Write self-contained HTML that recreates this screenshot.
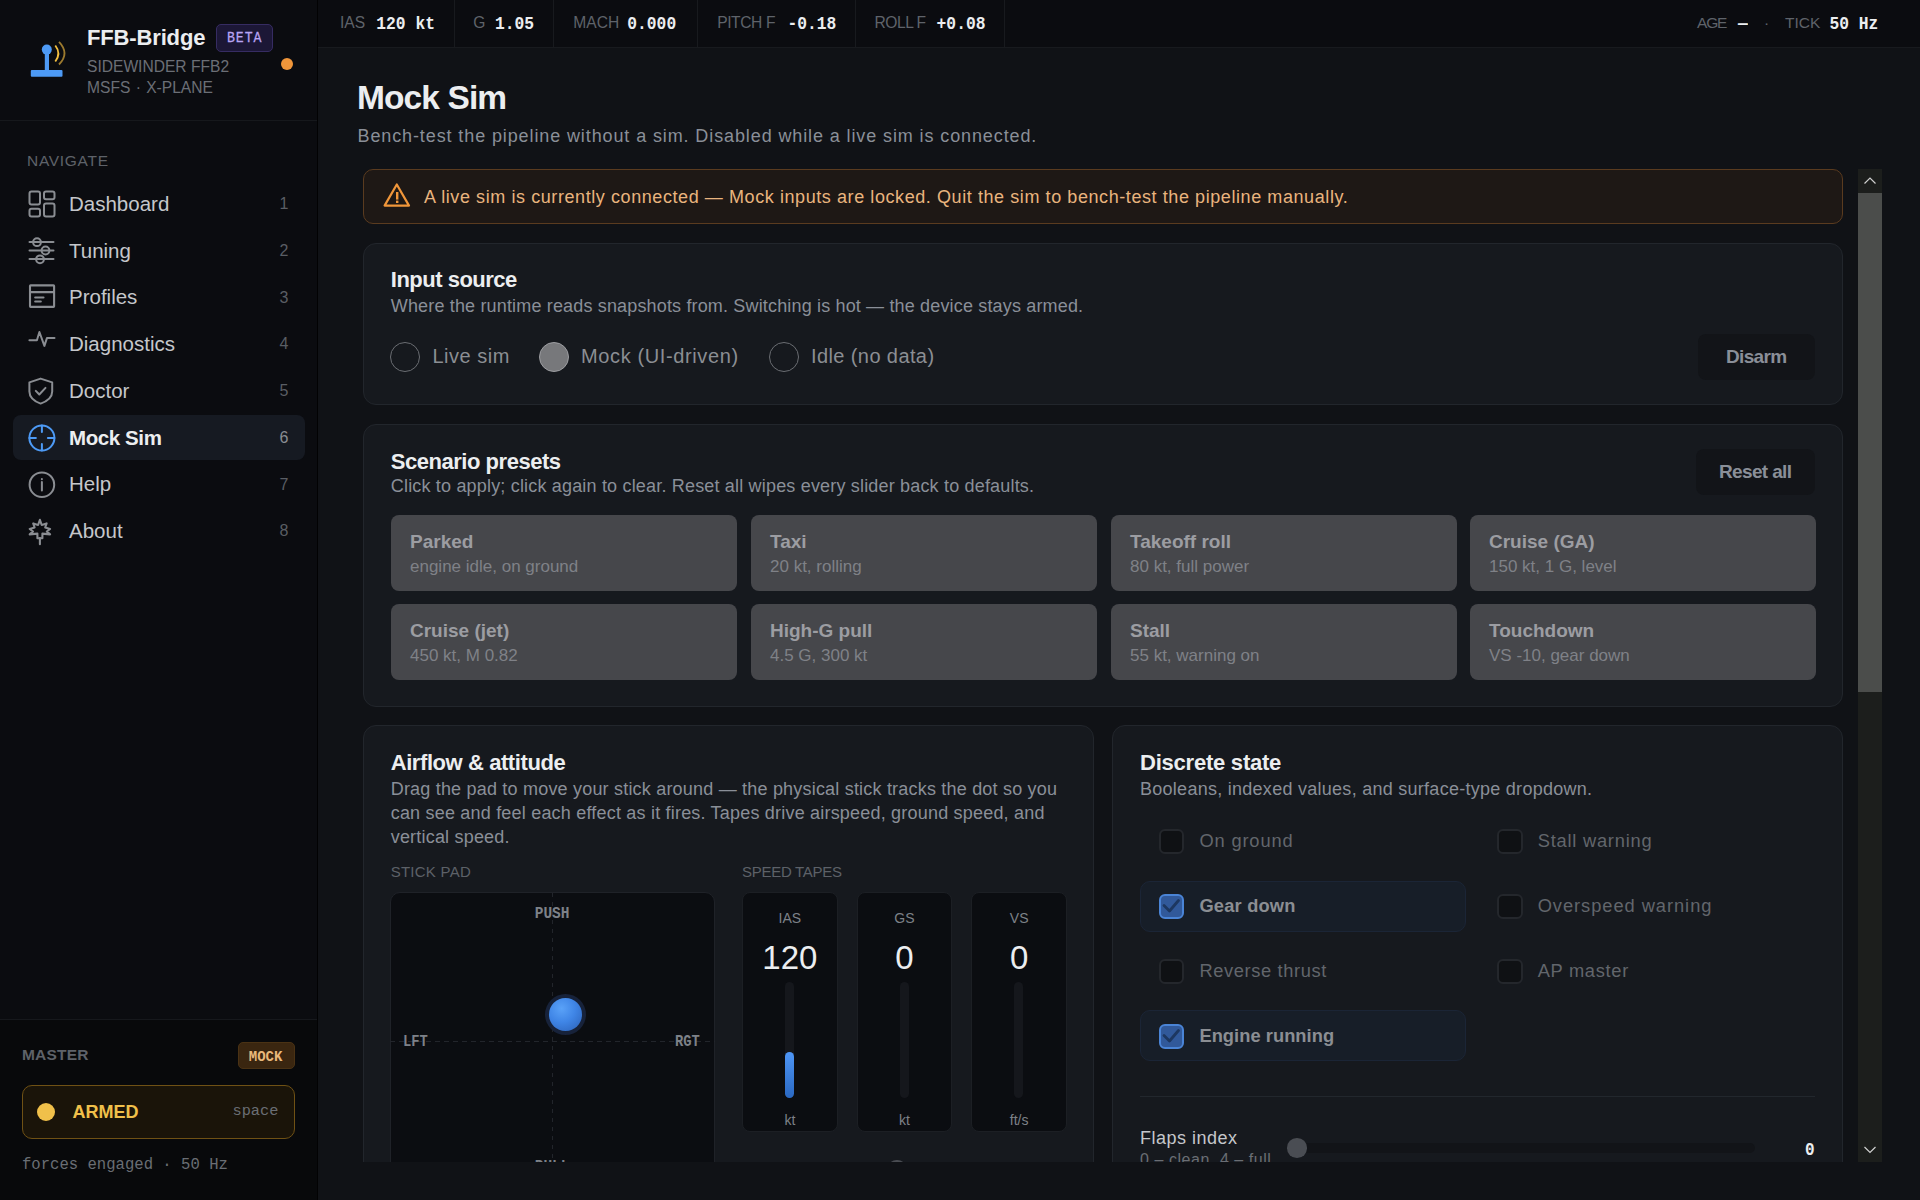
<!DOCTYPE html>
<html><head><meta charset="utf-8">
<style>
*{box-sizing:border-box;margin:0;padding:0}
html,body{width:1920px;height:1200px;overflow:hidden;background:#101216;font-family:"Liberation Sans",sans-serif}
.a{position:absolute}
.t{position:absolute;white-space:nowrap;line-height:1}
.m{font-family:"Liberation Mono",monospace}
.b{font-weight:bold}
#side{position:absolute;left:0;top:0;width:318px;height:1200px;background:#0b0c10;border-right:1px solid #020203}
#top{position:absolute;left:318px;top:0;width:1602px;height:48px;background:#0b0c10;border-bottom:1px solid #181a1e}
.sep{position:absolute;top:0;width:1px;height:47px;background:#181a1e}
.tl{color:#5f636a;font-size:15.6px;letter-spacing:0px;margin-top:0.2px}
.tv{color:#eceef0;font-size:16.3px;font-weight:bold;transform:scaleY(1.18);transform-origin:0 12.5px}
.nav{color:#c5c7cb;font-size:20.5px;margin-top:0.4px}
.num{color:#5a5e64;font-size:16px;margin-right:-1.5px;margin-top:-1.8px}
.ico{position:absolute;left:27px;width:30px;height:30px}
.card{position:absolute;background:#16191e;border:1px solid #22262c;border-radius:13px}
.ct{color:#eceef0;font-size:22px;font-weight:bold}
.cd{color:#8a8f98;font-size:18px}
.tile{position:absolute;background:#46474b;border-radius:8px;width:346px;height:76.7px}
.tile .tt{position:absolute;left:19px;top:17.2px;color:#9c9da2;font-size:19px;font-weight:bold;line-height:1;white-space:nowrap}
.tile .ts{position:absolute;left:19px;top:43px;color:#7f8187;font-size:17px;line-height:1;white-space:nowrap}
</style></head><body>

<!-- SIDEBAR -->
<div id="side">
  <svg class="a" style="left:26px;top:38px" width="44" height="44" viewBox="26 38 44 44">
    <rect x="30.8" y="70" width="31.7" height="6.7" rx="1" fill="#4d9af5"/>
    <rect x="44.8" y="52" width="4.2" height="19" fill="#4d9af5"/>
    <circle cx="46.8" cy="49.6" r="5" fill="#4d9af5"/>
    <path d="M55.3 45.5 Q61.5 53.5 55.3 61.5" stroke="#f5c040" stroke-width="1.8" fill="none"/>
    <path d="M59 41.8 Q70 53.3 59 64.5" stroke="#9c7a2e" stroke-width="1.8" fill="none"/>
  </svg>
  <div class="t b" style="left:87px;top:27px;font-size:22px;letter-spacing:-0.15px;color:#eceef0">FFB-Bridge</div>
  <div class="a" style="left:216px;top:24px;width:57px;height:27.5px;background:#1c1736;border:1px solid #362c62;border-radius:5px"></div>
  <div class="t m" style="left:227px;top:31.8px;font-size:13.2px;letter-spacing:0.9px;color:#b8a4f4;transform:scaleY(1.12);transform-origin:0 10px;-webkit-text-stroke:0.25px #b8a4f4">BETA</div>
  <div class="t" style="left:87px;top:58.5px;font-size:15.6px;color:#6b6f76">SIDEWINDER FFB2</div>
  <div class="t" style="left:87px;top:79.7px;font-size:15.6px;color:#6b6f76;word-spacing:1px">MSFS · X-PLANE</div>
  <div class="a" style="left:280.5px;top:57.5px;width:12.5px;height:12.5px;border-radius:50%;background:#f0963a"></div>
  <div class="a" style="left:0;top:120px;width:317px;height:1px;background:#16181c"></div>

  <div class="t" style="left:27px;top:152.7px;font-size:15.5px;letter-spacing:0.7px;color:#5e6269">NAVIGATE</div>

  <div class="a" style="left:12.5px;top:415.3px;width:292px;height:45px;border-radius:8px;background:#161a22"></div>

  <!-- icons -->
  <svg class="a" style="left:0;top:0" width="70" height="560" viewBox="0 0 70 560" fill="none" stroke="#8a8d92" stroke-width="2" stroke-linecap="round" stroke-linejoin="round">
    <!-- dashboard -->
    <rect x="29.5" y="191.5" width="10.5" height="13" rx="2"/>
    <rect x="44" y="191.5" width="10.5" height="7.8" rx="2"/>
    <rect x="29.5" y="208.7" width="10.5" height="7.8" rx="2"/>
    <rect x="44" y="203.5" width="10.5" height="13" rx="2"/>
    <!-- tuning -->
    <line x1="29.5" y1="242" x2="53.5" y2="242"/>
    <line x1="29.5" y1="250.5" x2="53.5" y2="250.5"/>
    <line x1="29.5" y1="259" x2="53.5" y2="259"/>
    <circle cx="37" cy="242.2" r="3.9"/>
    <circle cx="45.5" cy="250.5" r="3.9"/>
    <circle cx="40" cy="259.3" r="3.9"/>
    <!-- profiles -->
    <rect x="30" y="285.4" width="24.1" height="21.5" rx="0.6" stroke-width="2.1"/>
    <line x1="30" y1="292.1" x2="54" y2="292.1" stroke-width="2.1"/>
    <line x1="35.2" y1="297.5" x2="43.5" y2="297.5" stroke-width="2.1"/>
    <line x1="35.2" y1="301.5" x2="40.8" y2="301.5" stroke-width="2.1"/>
    <!-- diagnostics -->
    <polyline points="29.4,340.3 36.9,340.3 39.4,332 44.4,345.9 47,337.9 54.5,337.9"/>
    <!-- doctor -->
    <path d="M40.6 378.6 L52.2 382.4 L52.2 391.5 Q52.2 399.5 40.6 403.6 Q29.4 399.5 29.4 391.5 L29.4 382.4 Z"/>
    <polyline points="35.8,390.9 39.3,394.5 45.5,387.9"/>
    <!-- help -->
    <circle cx="41.9" cy="484.7" r="12.3"/>
    <line x1="41.9" y1="482" x2="41.9" y2="490.5"/>
    <line x1="41.9" y1="479" x2="41.9" y2="479.2"/>
    <!-- about: maple-ish star -->
    <path d="M39.9 519.8 L41.7 525 L46.6 523.4 L45.2 527.5 L50.1 529 L46.8 531.5 L50.1 534.4 L42.4 533.6 L42.4 538.2 L37.4 538.2 L37.4 533.6 L29.7 534.4 L33 531.5 L29.7 529 L34.6 527.5 L33.2 523.4 L38.1 525 Z" stroke-width="2.1"/>
    <line x1="39.9" y1="538" x2="39.9" y2="544.3" stroke-width="2.1"/>
  </svg>
  <svg class="a" style="left:0;top:400px" width="70" height="60" viewBox="0 400 70 60" fill="none" stroke="#4d9af5" stroke-width="2" stroke-linecap="round">
    <circle cx="41.9" cy="438" r="12.5"/>
    <line x1="41.9" y1="425.5" x2="41.9" y2="432"/>
    <line x1="41.9" y1="444" x2="41.9" y2="450.5"/>
    <line x1="29.4" y1="438" x2="35.9" y2="438"/>
    <line x1="47.9" y1="438" x2="54.4" y2="438"/>
  </svg>

  <div class="t nav" style="left:69px;top:193.5px">Dashboard</div>
  <div class="t nav" style="left:69px;top:240.3px">Tuning</div>
  <div class="t nav" style="left:69px;top:287px">Profiles</div>
  <div class="t nav" style="left:69px;top:333.8px">Diagnostics</div>
  <div class="t nav" style="left:69px;top:380.5px">Doctor</div>
  <div class="t nav b" style="left:69px;top:427.3px;color:#eceef0;letter-spacing:-0.4px">Mock Sim</div>
  <div class="t nav" style="left:69px;top:474px">Help</div>
  <div class="t nav" style="left:69px;top:520.8px">About</div>

  <div class="t num" style="right:30px;top:197.8px">1</div>
  <div class="t num" style="right:30px;top:244.5px">2</div>
  <div class="t num" style="right:30px;top:291.3px">3</div>
  <div class="t num" style="right:30px;top:338px">4</div>
  <div class="t num" style="right:30px;top:384.8px">5</div>
  <div class="t num" style="right:30px;top:431.5px;color:#8a8d92">6</div>
  <div class="t num" style="right:30px;top:478.3px">7</div>
  <div class="t num" style="right:30px;top:525px">8</div>

  <!-- bottom -->
  <div class="a" style="left:0;top:1020px;width:317px;height:180px;background:#08090b"></div>
  <div class="a" style="left:0;top:1019px;width:317px;height:1px;background:#16181c"></div>
  <div class="t" style="left:22px;top:1047px;font-size:15.5px;letter-spacing:0.2px;color:#5e6269;font-weight:bold">MASTER</div>
  <div class="a" style="left:237.5px;top:1041.7px;width:57.5px;height:27px;border-radius:5px;background:#3a2610;border:1px solid #4a3214"></div>
  <div class="t m b" style="left:248.8px;top:1049.6px;font-size:14px;color:#e8b87a">MOCK</div>
  <div class="a" style="left:22px;top:1085px;width:273px;height:53.5px;border-radius:10px;background:#1a1409;border:1.5px solid #6f5114"></div>
  <div class="a" style="left:37px;top:1102.7px;width:18px;height:18px;border-radius:50%;background:#f0c04a"></div>
  <div class="t b" style="left:72.5px;top:1102.6px;font-size:18px;color:#f0c04a">ARMED</div>
  <div class="t m" style="left:232.5px;top:1104.1px;font-size:15.3px;color:#6a6e74">space</div>
  <div class="t m" style="left:22px;top:1158px;font-size:15.6px;color:#6a6e74">forces engaged · 50 Hz</div>
</div>

<!-- TOPBAR -->
<div id="top"></div>
<div class="sep" style="left:454px"></div>
<div class="sep" style="left:553px"></div>
<div class="sep" style="left:697px"></div>
<div class="sep" style="left:855px"></div>
<div class="sep" style="left:1004px"></div>
<div class="t tl" style="left:340px;top:14.8px">IAS</div>
<div class="t m tv" style="left:376.3px;top:16.7px">120 kt</div>
<div class="t tl" style="left:473.3px;top:14.8px">G</div>
<div class="t m tv" style="left:495px;top:16.7px">1.05</div>
<div class="t tl" style="left:573.3px;top:14.8px">MACH</div>
<div class="t m tv" style="left:627.3px;top:16.7px">0.000</div>
<div class="t tl" style="left:717.2px;top:14.8px;letter-spacing:-0.4px">PITCH F</div>
<div class="t m tv" style="left:787.5px;top:16.7px">-0.18</div>
<div class="t tl" style="left:874.6px;top:14.8px;letter-spacing:-0.5px">ROLL F</div>
<div class="t m tv" style="left:936.6px;top:16.7px">+0.08</div>
<div class="t tl" style="left:1697px;top:15.3px;font-size:15.5px;letter-spacing:-1.2px">AGE</div>
<div class="t m tv" style="left:1738px;top:16.7px;font-weight:bold">—</div>
<div class="t tl" style="left:1764px;top:15.3px;font-size:15.5px">·</div>
<div class="t tl" style="left:1785px;top:15.3px;font-size:15.5px">TICK</div>
<div class="t m tv" style="left:1829.4px;top:16.7px">50 Hz</div>


<!-- HEADER -->
<div class="t b" style="left:357px;top:80.6px;font-size:33.5px;letter-spacing:-0.9px;color:#eceef0">Mock Sim</div>
<div class="t cd" style="left:357.5px;top:126.65px;letter-spacing:0.89px">Bench-test the pipeline without a sim. Disabled while a live sim is connected.</div>

<div id="clip" class="a" style="left:0;top:0;width:1920px;height:1200px;clip-path:inset(169px 0 38px 0)">
<!-- BANNER -->
<div class="a" style="left:362.7px;top:169px;width:1480.3px;height:55px;background:#1e1815;border:1px solid #5a3b1f;border-radius:10px"></div>
<svg class="a" style="left:380px;top:180px" width="34" height="30" viewBox="380 180 34 30" fill="none" stroke="#f0963a" stroke-width="2.2" stroke-linejoin="round">
  <path d="M396.8 184.5 L409 205.6 L384.6 205.6 Z"/>
  <line x1="397.2" y1="192" x2="397.2" y2="199.6" stroke-width="2.4"/>
  <line x1="397.2" y1="200.6" x2="397.2" y2="203" stroke-width="2.4"/>
</svg>
<div class="t" style="left:424px;top:187.75px;font-size:18px;letter-spacing:0.58px;color:#e9b47e">A live sim is currently connected — Mock inputs are locked. Quit the sim to bench-test the pipeline manually.</div>

<!-- CARD 1 -->
<div class="card" style="left:362.7px;top:242.7px;width:1480.3px;height:162.3px"></div>
<div class="t ct" style="left:390.8px;top:269.3px;letter-spacing:-0.5px">Input source</div>
<div class="t cd" style="left:390.8px;top:296.65px;letter-spacing:0.16px">Where the runtime reads snapshots from. Switching is hot — the device stays armed.</div>
<div class="a" style="left:390px;top:341.5px;width:30px;height:30px;border-radius:50%;border:1.6px solid #6a6d72"></div>
<div class="a" style="left:539px;top:341.5px;width:30px;height:30px;border-radius:50%;border:1.6px solid #9c9da1;background:#77787b"></div>
<div class="a" style="left:769px;top:341.5px;width:30px;height:30px;border-radius:50%;border:1.6px solid #6a6d72"></div>
<div class="t" style="left:432.5px;top:346px;font-size:20px;letter-spacing:0.5px;color:#8b8e93">Live sim</div>
<div class="t" style="left:581px;top:346px;font-size:20px;letter-spacing:0.62px;color:#8b8e93">Mock (UI-driven)</div>
<div class="t" style="left:811px;top:346px;font-size:20px;letter-spacing:0.4px;color:#8b8e93">Idle (no data)</div>
<div class="a" style="left:1698px;top:334px;width:117px;height:46px;border-radius:8px;background:#121418"></div>
<div class="t b" style="left:1726px;top:347.4px;font-size:19px;letter-spacing:-0.65px;color:#8a8f98">Disarm</div>

<!-- CARD 2 -->
<div class="card" style="left:362.7px;top:424px;width:1480.3px;height:283px"></div>
<div class="t ct" style="left:390.8px;top:450.7px;letter-spacing:-0.47px">Scenario presets</div>
<div class="t cd" style="left:390.8px;top:477.35px;letter-spacing:0.18px">Click to apply; click again to clear. Reset all wipes every slider back to defaults.</div>
<div class="a" style="left:1696px;top:449px;width:119px;height:46px;border-radius:8px;background:#121418"></div>
<div class="t b" style="left:1719px;top:461.9px;font-size:19px;letter-spacing:-0.65px;color:#8a8f98">Reset all</div>
<div class="tile" style="left:391px;top:514.5px"><div class="tt">Parked</div><div class="ts">engine idle, on ground</div></div>
<div class="tile" style="left:751px;top:514.5px"><div class="tt">Taxi</div><div class="ts">20 kt, rolling</div></div>
<div class="tile" style="left:1111px;top:514.5px"><div class="tt">Takeoff roll</div><div class="ts">80 kt, full power</div></div>
<div class="tile" style="left:1470px;top:514.5px"><div class="tt">Cruise (GA)</div><div class="ts">150 kt, 1 G, level</div></div>
<div class="tile" style="left:391px;top:603.8px"><div class="tt">Cruise (jet)</div><div class="ts">450 kt, M 0.82</div></div>
<div class="tile" style="left:751px;top:603.8px"><div class="tt">High-G pull</div><div class="ts">4.5 G, 300 kt</div></div>
<div class="tile" style="left:1111px;top:603.8px"><div class="tt">Stall</div><div class="ts">55 kt, warning on</div></div>
<div class="tile" style="left:1470px;top:603.8px"><div class="tt">Touchdown</div><div class="ts">VS -10, gear down</div></div>

<!-- CARD 3 -->
<div class="card" style="left:362.7px;top:725px;width:731.3px;height:600px"></div>
<div class="t ct" style="left:390.7px;top:751.8px;letter-spacing:-0.42px">Airflow &amp; attitude</div>
<div class="a cd" style="left:390.7px;top:776.7px;line-height:24px;white-space:nowrap;letter-spacing:0.2px">Drag the pad to move your stick around — the physical stick tracks the dot so you<br>can see and feel each effect as it fires. Tapes drive airspeed, ground speed, and<br>vertical speed.</div>
<div class="t" style="left:390.7px;top:863.8px;font-size:15px;letter-spacing:0.25px;color:#5d6168">STICK PAD</div>
<div class="t" style="left:742.1px;top:863.8px;font-size:15px;letter-spacing:-0.3px;color:#5d6168">SPEED TAPES</div>
<div class="a" style="left:390px;top:892px;width:325px;height:298px;border-radius:10px;background:#0b0d11;border:1px solid #1f2228"></div>
<div class="a" style="left:552px;top:893px;width:1px;height:296px;background:repeating-linear-gradient(180deg,#22252b 0 4.5px,transparent 4.5px 9px)"></div>
<div class="a" style="left:390px;top:1041px;width:325px;height:1px;background:repeating-linear-gradient(90deg,#22252b 0 4.8px,transparent 4.8px 9px)"></div>
<div class="t m b" style="left:534.7px;top:907.2px;font-size:14.5px;color:#7d8188;transform:scaleY(1.15);transform-origin:0 11.1px">PUSH</div>
<div class="t m b" style="left:403px;top:1035.5px;font-size:13.8px;color:#7d8188;transform:scaleY(1.15);transform-origin:0 10.6px">LFT</div>
<div class="t m b" style="left:675px;top:1035.5px;font-size:13.8px;color:#7d8188;transform:scaleY(1.15);transform-origin:0 10.6px">RGT</div>
<div class="t m b" style="left:534.7px;top:1160px;font-size:14.5px;color:#7d8188;transform:scaleY(1.15);transform-origin:0 11.1px">PULL</div>
<div class="a" style="left:887px;top:1160px;width:19.6px;height:19.6px;border-radius:50%;background:#4a4d53"></div>
<div class="a" style="left:545px;top:994px;width:41px;height:41px;border-radius:50%;background:#17223a"></div>
<div class="a" style="left:549.2px;top:998.2px;width:32.8px;height:32.8px;border-radius:50%;background:radial-gradient(circle at 38% 32%,#5aa2f8 0%,#3f85e6 45%,#2a5fb5 100%)"></div>

<div class="a" style="left:742px;top:892px;width:95.67px;height:240px;border-radius:8px;background:#0b0d11;border:1px solid #1c1f24"></div>
<div class="a" style="left:856.67px;top:892px;width:95.67px;height:240px;border-radius:8px;background:#0b0d11;border:1px solid #1c1f24"></div>
<div class="a" style="left:971.33px;top:892px;width:95.67px;height:240px;border-radius:8px;background:#0b0d11;border:1px solid #1c1f24"></div>
<div class="t" style="left:742px;width:95.67px;text-align:center;top:910.8px;font-size:14px;color:#7d8188">IAS</div>
<div class="t" style="left:856.67px;width:95.67px;text-align:center;top:910.8px;font-size:14px;color:#7d8188">GS</div>
<div class="t" style="left:971.33px;width:95.67px;text-align:center;top:910.8px;font-size:14px;color:#7d8188">VS</div>
<div class="t" style="left:742px;width:95.67px;text-align:center;top:941px;font-size:33px;color:#eceef0">120</div>
<div class="t" style="left:856.67px;width:95.67px;text-align:center;top:941px;font-size:33px;color:#eceef0">0</div>
<div class="t" style="left:971.33px;width:95.67px;text-align:center;top:941px;font-size:33px;color:#eceef0">0</div>
<div class="a" style="left:785px;top:982px;width:9px;height:116px;border-radius:5px;background:#15171c"></div>
<div class="a" style="left:785px;top:1051.5px;width:9px;height:46.5px;border-radius:5px;background:linear-gradient(#4e96f6,#2a68c2)"></div>
<div class="a" style="left:899.5px;top:982px;width:9px;height:116px;border-radius:5px;background:#15171c"></div>
<div class="a" style="left:1014px;top:982px;width:9px;height:116px;border-radius:5px;background:#15171c"></div>
<div class="t" style="left:742px;width:95.67px;text-align:center;top:1112.8px;font-size:14px;color:#7d8188">kt</div>
<div class="t" style="left:856.67px;width:95.67px;text-align:center;top:1112.8px;font-size:14px;color:#7d8188">kt</div>
<div class="t" style="left:971.33px;width:95.67px;text-align:center;top:1112.8px;font-size:14px;color:#7d8188">ft/s</div>

<!-- CARD 4 -->
<div class="card" style="left:1112px;top:725px;width:731px;height:600px"></div>
<div class="t ct" style="left:1140px;top:751.5px;letter-spacing:-0.23px">Discrete state</div>
<div class="t cd" style="left:1140px;top:779.75px;letter-spacing:0.27px">Booleans, indexed values, and surface-type dropdown.</div>
<div class="a" style="left:1140px;top:880.5px;width:326px;height:51px;border-radius:10px;background:#171e28;border:1px solid #1b2536"></div>
<div class="a" style="left:1140px;top:1010px;width:326px;height:51px;border-radius:10px;background:#171e28;border:1px solid #1b2536"></div>
<div class="a" style="left:1158.5px;top:828.5px;width:25.5px;height:25.5px;border-radius:6px;background:#0f1114;border:2px solid #24272c"></div>
<div class="t" style="left:1199.4px;top:832.0px;font-size:18.3px;letter-spacing:0.85px;color:#62666c">On ground</div>
<div class="a" style="left:1497px;top:828.5px;width:25.5px;height:25.5px;border-radius:6px;background:#0f1114;border:2px solid #24272c"></div>
<div class="t" style="left:1537.7px;top:832.0px;font-size:18.3px;letter-spacing:0.77px;color:#62666c">Stall warning</div>
<div class="a" style="left:1158.5px;top:893.5px;width:25.5px;height:25.5px;border-radius:6px;background:#31599a;border:2.2px solid #4a84d6"></div>
<svg class="a" style="left:1158.5px;top:893.5px" width="26" height="26" viewBox="0 0 26 26"><polyline points="5,11.5 10.5,17 19.5,6.5" fill="none" stroke="#1d3760" stroke-width="2.8" stroke-linecap="round" stroke-linejoin="round"/></svg>
<div class="t b" style="left:1199.4px;top:897.0px;font-size:18.3px;letter-spacing:0.2px;color:#8b8e93">Gear down</div>
<div class="a" style="left:1497px;top:893.5px;width:25.5px;height:25.5px;border-radius:6px;background:#0f1114;border:2px solid #24272c"></div>
<div class="t" style="left:1537.7px;top:897.0px;font-size:18.3px;letter-spacing:0.95px;color:#62666c">Overspeed warning</div>
<div class="a" style="left:1158.5px;top:958.5px;width:25.5px;height:25.5px;border-radius:6px;background:#0f1114;border:2px solid #24272c"></div>
<div class="t" style="left:1199.4px;top:962.0px;font-size:18.3px;letter-spacing:0.63px;color:#62666c">Reverse thrust</div>
<div class="a" style="left:1497px;top:958.5px;width:25.5px;height:25.5px;border-radius:6px;background:#0f1114;border:2px solid #24272c"></div>
<div class="t" style="left:1537.7px;top:962.0px;font-size:18.3px;letter-spacing:0.7px;color:#62666c">AP master</div>
<div class="a" style="left:1158.5px;top:1023.5px;width:25.5px;height:25.5px;border-radius:6px;background:#31599a;border:2.2px solid #4a84d6"></div>
<svg class="a" style="left:1158.5px;top:1023.5px" width="26" height="26" viewBox="0 0 26 26"><polyline points="5,11.5 10.5,17 19.5,6.5" fill="none" stroke="#1d3760" stroke-width="2.8" stroke-linecap="round" stroke-linejoin="round"/></svg>
<div class="t b" style="left:1199.4px;top:1027.0px;font-size:18.3px;letter-spacing:0.05px;color:#8b8e93">Engine running</div>
<div class="a" style="left:1140px;top:1096px;width:675px;height:1px;background:#22272d"></div>
<div class="t" style="left:1140px;top:1128.5px;font-size:18px;letter-spacing:0.5px;color:#c5c7cb">Flaps index</div>
<div class="t" style="left:1140px;top:1152px;font-size:16px;letter-spacing:0.55px;color:#6a6e74">0 – clean, 4 – full</div>
<div class="a" style="left:1287px;top:1143px;width:468px;height:10px;border-radius:5px;background:#121418"></div>
<div class="a" style="left:1287.3px;top:1138.4px;width:19.6px;height:19.6px;border-radius:50%;background:#4a4d53"></div>
<div class="t m b" style="left:1805px;top:1142.5px;font-size:16px;color:#eceef0;transform:scaleY(1.18);transform-origin:0 12.3px">0</div>
</div>

<!-- SCROLLBAR -->
<div class="a" style="left:1858px;top:169px;width:24px;height:993px;background:#1c1e1c"></div>
<div class="a" style="left:1858px;top:193px;width:24px;height:499px;background:#4b4d4b"></div>
<svg class="a" style="left:1858px;top:169px" width="24" height="24" viewBox="0 0 24 24"><polyline points="6.5,14.5 12,9 17.5,14.5" fill="none" stroke="#d0d0d0" stroke-width="1.2"/></svg>
<svg class="a" style="left:1858px;top:1138px" width="24" height="24" viewBox="0 0 24 24"><polyline points="6.5,9 12,14.5 17.5,9" fill="none" stroke="#d0d0d0" stroke-width="1.2"/></svg>

</body></html>
